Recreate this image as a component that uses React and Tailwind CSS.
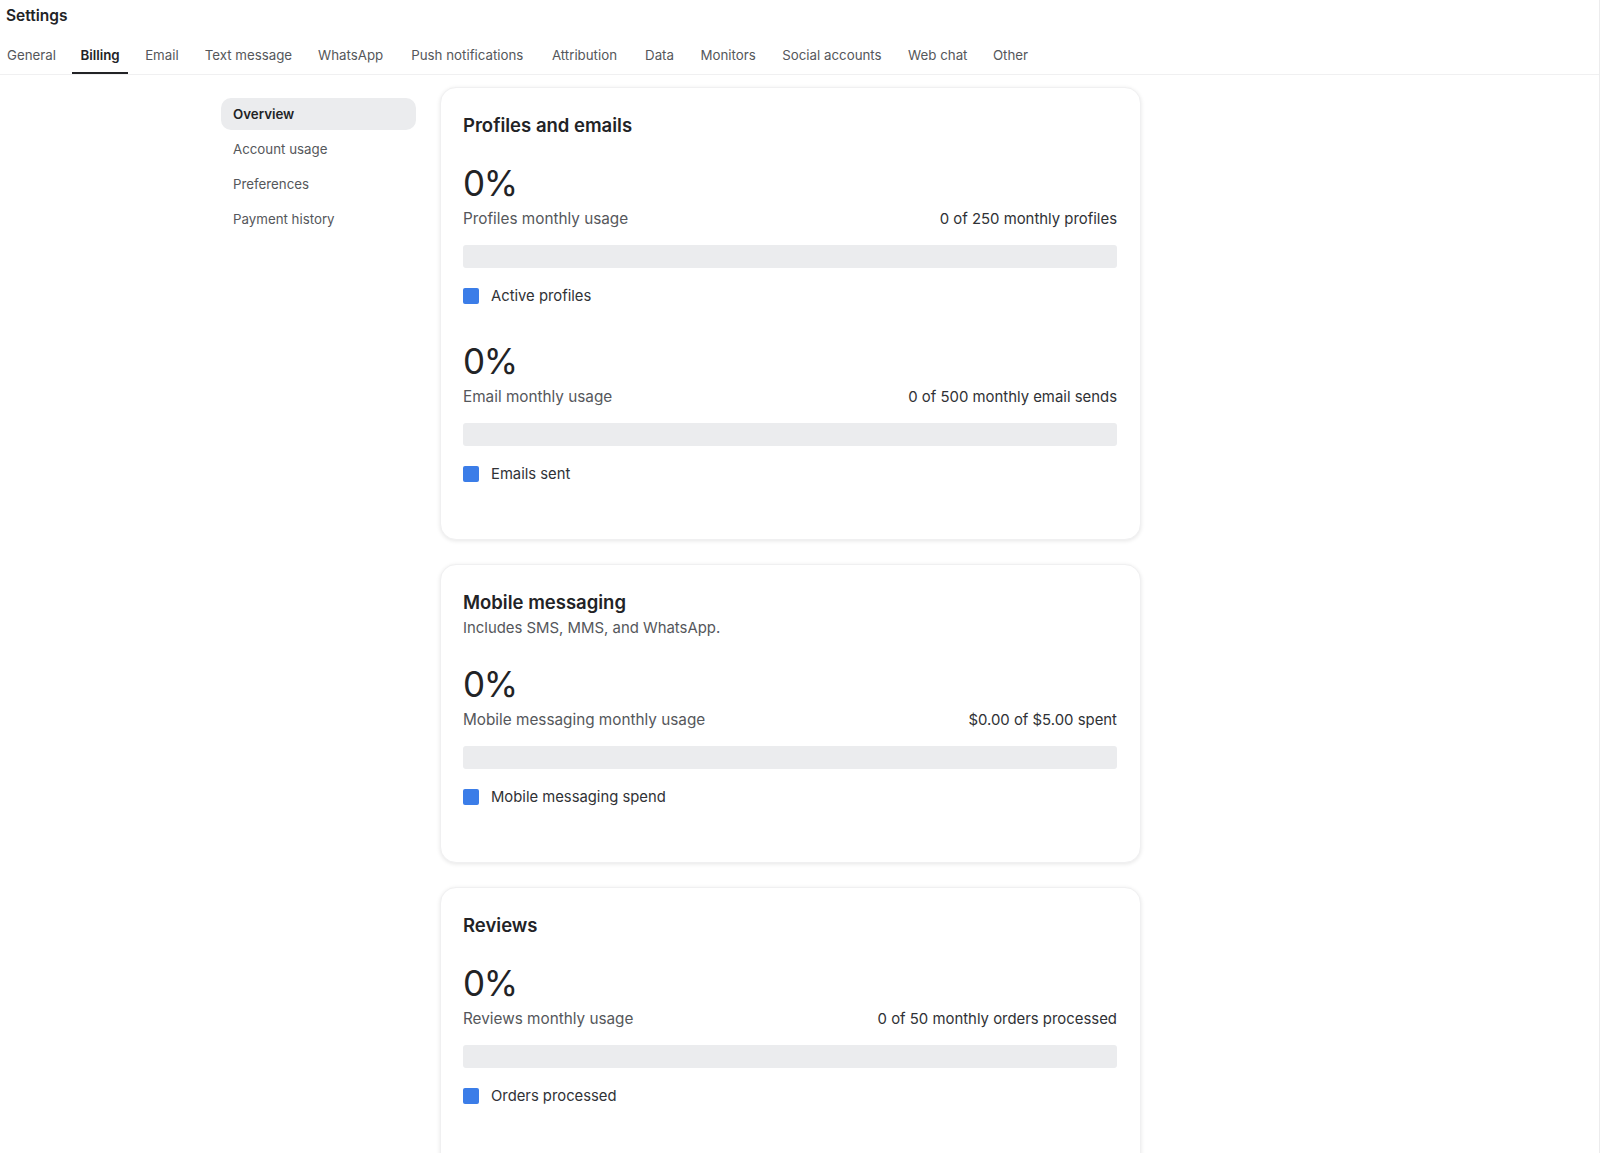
import React from 'react';

const tabs = [
  { label: 'General', nudge: 'ml-[-1px]' },
  { label: 'Billing', nudge: 'ml-[-2px]' },
  { label: 'Email', nudge: 'ml-[-1px]' },
  { label: 'Text message', nudge: 'ml-[-0.5px]' },
  { label: 'WhatsApp', nudge: 'ml-[-0.5px]' },
  { label: 'Push notifications', nudge: 'ml-[1.5px]' },
  { label: 'Attribution', nudge: 'ml-[2px]' },
  { label: 'Data', nudge: 'ml-[1.5px]' },
  { label: 'Monitors', nudge: '' },
  { label: 'Social accounts', nudge: '' },
  { label: 'Web chat', nudge: '' },
  { label: 'Other', nudge: 'ml-[-1px]' },
];
const sideLinks = ['Overview', 'Account usage', 'Preferences', 'Payment history'];

const UsageBlock = ({ label, detail, legend }) => (
  <div>
    <div className="text-[35px] leading-[44px] tracking-[-0.04em] text-[#222326]">0%</div>
    <div className="mt-1 flex justify-between leading-[20px]">
      <span className="text-[15.3px] text-[#55575b]">{label}</span>
      <span className="text-[14.9px] text-[#303236]">{detail}</span>
    </div>
    <div className="mt-4 h-[23px] rounded-[3px] bg-[#ebecee]" />
    <div className="mt-[18px] flex items-center gap-[12px] text-[14.8px] leading-[20px] text-[#303236]">
      <span className="h-4 w-4 rounded-[2px] bg-[#3b7de8]" />
      {legend}
    </div>
  </div>
);

const Card = ({ title, subtitle, className, children }) => (
  <section className={`rounded-2xl border border-[#f0f0f1] bg-white pl-[22px] pr-[23px] pt-6 shadow-[0_1px_4px_rgba(0,0,0,0.1)] ${className}`}>
    <h2 className="text-[18.5px] font-semibold leading-[26px] text-[#222326]">{title}</h2>
    {subtitle && <p className="mt-[3px] text-[14.9px] leading-[20px] text-[#55575b]">{subtitle}</p>}
    {children}
  </section>
);

export default function App() {
  return (
    <div className="h-[1153px] overflow-hidden border-r border-[#ececed] bg-white font-['Inter',sans-serif]">
      <header className="border-b border-[#f0f0f1]">
        <h1 className="px-[6px] pt-[6px] text-[15.5px] font-semibold leading-[20px] text-[#222326]">Settings</h1>
        <nav className="mt-[13px] flex gap-[10.5px] text-[13.3px]">
          {tabs.map((tab) => (
            <a
              key={tab.label}
              className={`h-[35px] px-2 pt-[6px] leading-[20px] ${tab.nudge} ${
                tab.label === 'Billing' ? 'border-b-2 border-[#222326] font-semibold text-[#222326]' : 'text-[#55575b]'
              }`}
            >
              {tab.label}
            </a>
          ))}
        </nav>
      </header>

      <div className="flex items-start gap-[24px] pl-[221px] pt-3">
        <aside className="flex w-[195px] flex-col gap-[3.2px] pt-[11px] text-[13.3px]">
          {sideLinks.map((link) => (
            <a
              key={link}
              className={`flex h-8 items-center rounded-[10px] px-3 pt-px ${
                link === 'Overview' ? 'bg-[#ebecee] font-semibold text-[#222326]' : 'text-[#55575b]'
              }`}
            >
              {link}
            </a>
          ))}
        </aside>

        <main className="flex w-[701px] flex-col gap-6">
          <Card title="Profiles and emails" className="h-[453px]">
            <div className="mt-[23px] flex flex-col gap-[33px]">
              <UsageBlock label="Profiles monthly usage" detail="0 of 250 monthly profiles" legend="Active profiles" />
              <UsageBlock label="Email monthly usage" detail="0 of 500 monthly email sends" legend="Emails sent" />
            </div>
          </Card>

          <Card title="Mobile messaging" subtitle="Includes SMS, MMS, and WhatsApp." className="h-[299px]">
            <div className="mt-6">
              <UsageBlock label="Mobile messaging monthly usage" detail="$0.00 of $5.00 spent" legend="Mobile messaging spend" />
            </div>
          </Card>

          <Card title="Reviews" className="h-[300px]">
            <div className="mt-[23px]">
              <UsageBlock label="Reviews monthly usage" detail="0 of 50 monthly orders processed" legend="Orders processed" />
            </div>
          </Card>
        </main>
      </div>
    </div>
  );
}
